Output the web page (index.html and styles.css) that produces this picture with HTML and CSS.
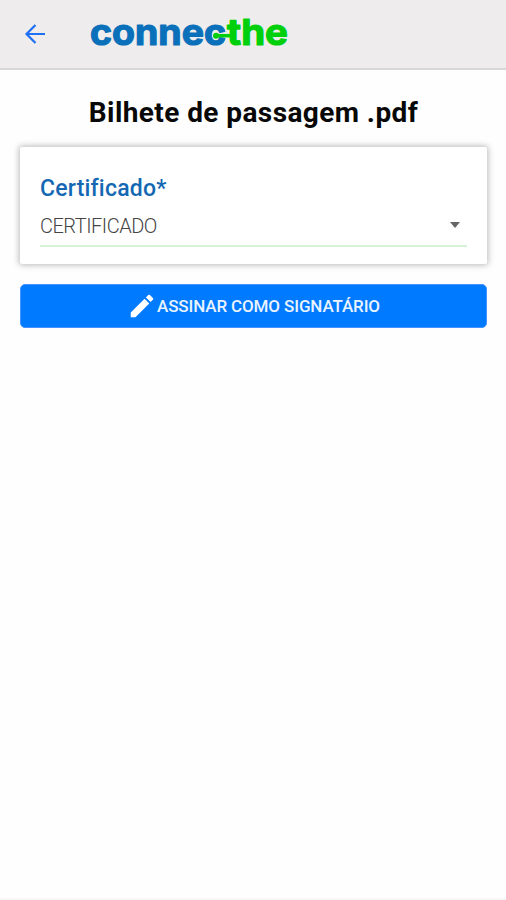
FILE: index.html
```
<!DOCTYPE html>
<html lang="pt-BR">
<head>
  <meta charset="UTF-8" />
  <meta name="viewport" content="width=device-width, initial-scale=1.0"/>
  <title>Connecthe</title>
  <link rel="stylesheet" href="styles.css">
</head>
<body>

  <header class="topbar">
    <a href="#" class="back" aria-label="Voltar">
      <svg width="22" height="22" viewBox="0 0 22 22">
        <path d="M21 11H2.5M11.5 2L2.5 11L11.5 20" />
      </svg>
    </a>
    <svg class="logo" width="210" height="60" viewBox="0 0 210 60">
      <text class="logo-blue" x="1" y="41" textLength="136" lengthAdjust="spacingAndGlyphs">connec</text>
      <text class="logo-green" x="138" y="41" textLength="61" lengthAdjust="spacingAndGlyphs">the</text>
      <path class="logo-plug" d="M127 31.7H142" />
      <circle class="logo-dot" cx="127" cy="31.7" r="3" />
    </svg>
  </header>

  <main class="container">
    <h1>Bilhete de passagem .pdf</h1>

    <div class="card">
      <label class="label" for="cert">Certificado*</label>
      <div class="select" id="cert">
        <span>CERTIFICADO</span>
        <i class="caret"></i>
      </div>
    </div>

    <button class="sign">
      <svg width="30" height="30" viewBox="0 0 24 24">
        <path d="M3 17.25V21h3.75L17.81 9.94l-3.75-3.75L3 17.25zM20.71 7.04a1 1 0 0 0 0-1.41l-2.34-2.34a1 1 0 0 0-1.41 0l-1.83 1.83 3.75 3.75 1.83-1.83z" />
      </svg>
      <span>ASSINAR COMO SIGNATÁRIO</span>
    </button>
  </main>

  <footer class="bottom"></footer>

</body>
</html>
```

FILE: styles.css
```
* {
  box-sizing: border-box;
}
body {
  margin: 0;
  min-height: 100vh;
  display: flex;
  flex-direction: column;
  background: #fefefe;
  font-family: Roboto, sans-serif;
}
.topbar {
  display: flex;
  align-items: center;
  height: 70px;
  padding: 0 24px 0;
  background: #eeecec;
  border-bottom: 2px solid #d9d8d8;
}
.back {
  display: flex;
  width: 65px;
}
.back svg {
  fill: none;
  stroke: #1f70f2;
  stroke-width: 2.2;
}
.logo {
  font-family: Inter, sans-serif;
  font-size: 36px;
  font-weight: 700;
  stroke-width: 1.2;
  stroke-linejoin: round;
}
.logo-blue {
  fill: #0b70ba;
  stroke: #0b70ba;
}
.logo-green {
  fill: #00d00b;
  stroke: #00d00b;
}
.logo-plug {
  stroke: #00d00b;
  stroke-width: 3.5;
}
.logo-dot {
  fill: #00d00b;
}
.container {
  flex: 1;
  padding: 27px 19px 0 20px;
}
h1 {
  margin: 0;
  font-size: 28px;
  line-height: 32px;
  font-weight: 700;
  letter-spacing: 0.42px;
  text-align: center;
  color: #080808;
  white-space: nowrap;
}
.card {
  height: 117px;
  margin-top: 18px;
  padding: 28px 20px 0;
  background: #fff;
  border-radius: 2px;
  box-shadow: 0 0 6px 1px rgba(0, 0, 0, 0.28);
}
.label {
  display: block;
  font-size: 23px;
  line-height: 28px;
  font-weight: 500;
  letter-spacing: 0.2px;
  color: #1468b3;
}
.select {
  display: flex;
  align-items: center;
  justify-content: space-between;
  height: 44px;
  padding: 4px 7px 0 0;
  border-bottom: 2px solid #d5f4d5;
  font-size: 20px;
  font-weight: 300;
  letter-spacing: -0.5px;
  color: #444;
}
.caret {
  margin-bottom: 2px;
  border: 5px solid transparent;
  border-top: 6px solid #666;
  border-bottom: 0;
}
.sign {
  display: flex;
  align-items: center;
  justify-content: center;
  width: 100%;
  height: 44px;
  margin-top: 20px;
  padding: 0 0 1px;
  border: 1px solid #4593ff;
  border-radius: 5px;
  background: #007bff;
  color: #e9f3ff;
  font-family: inherit;
  font-size: 17px;
  font-weight: 500;
  letter-spacing: -0.13px;
}
.sign svg {
  fill: #fff;
}
.bottom {
  height: 2px;
  background: #f7f7f7;
}
```
